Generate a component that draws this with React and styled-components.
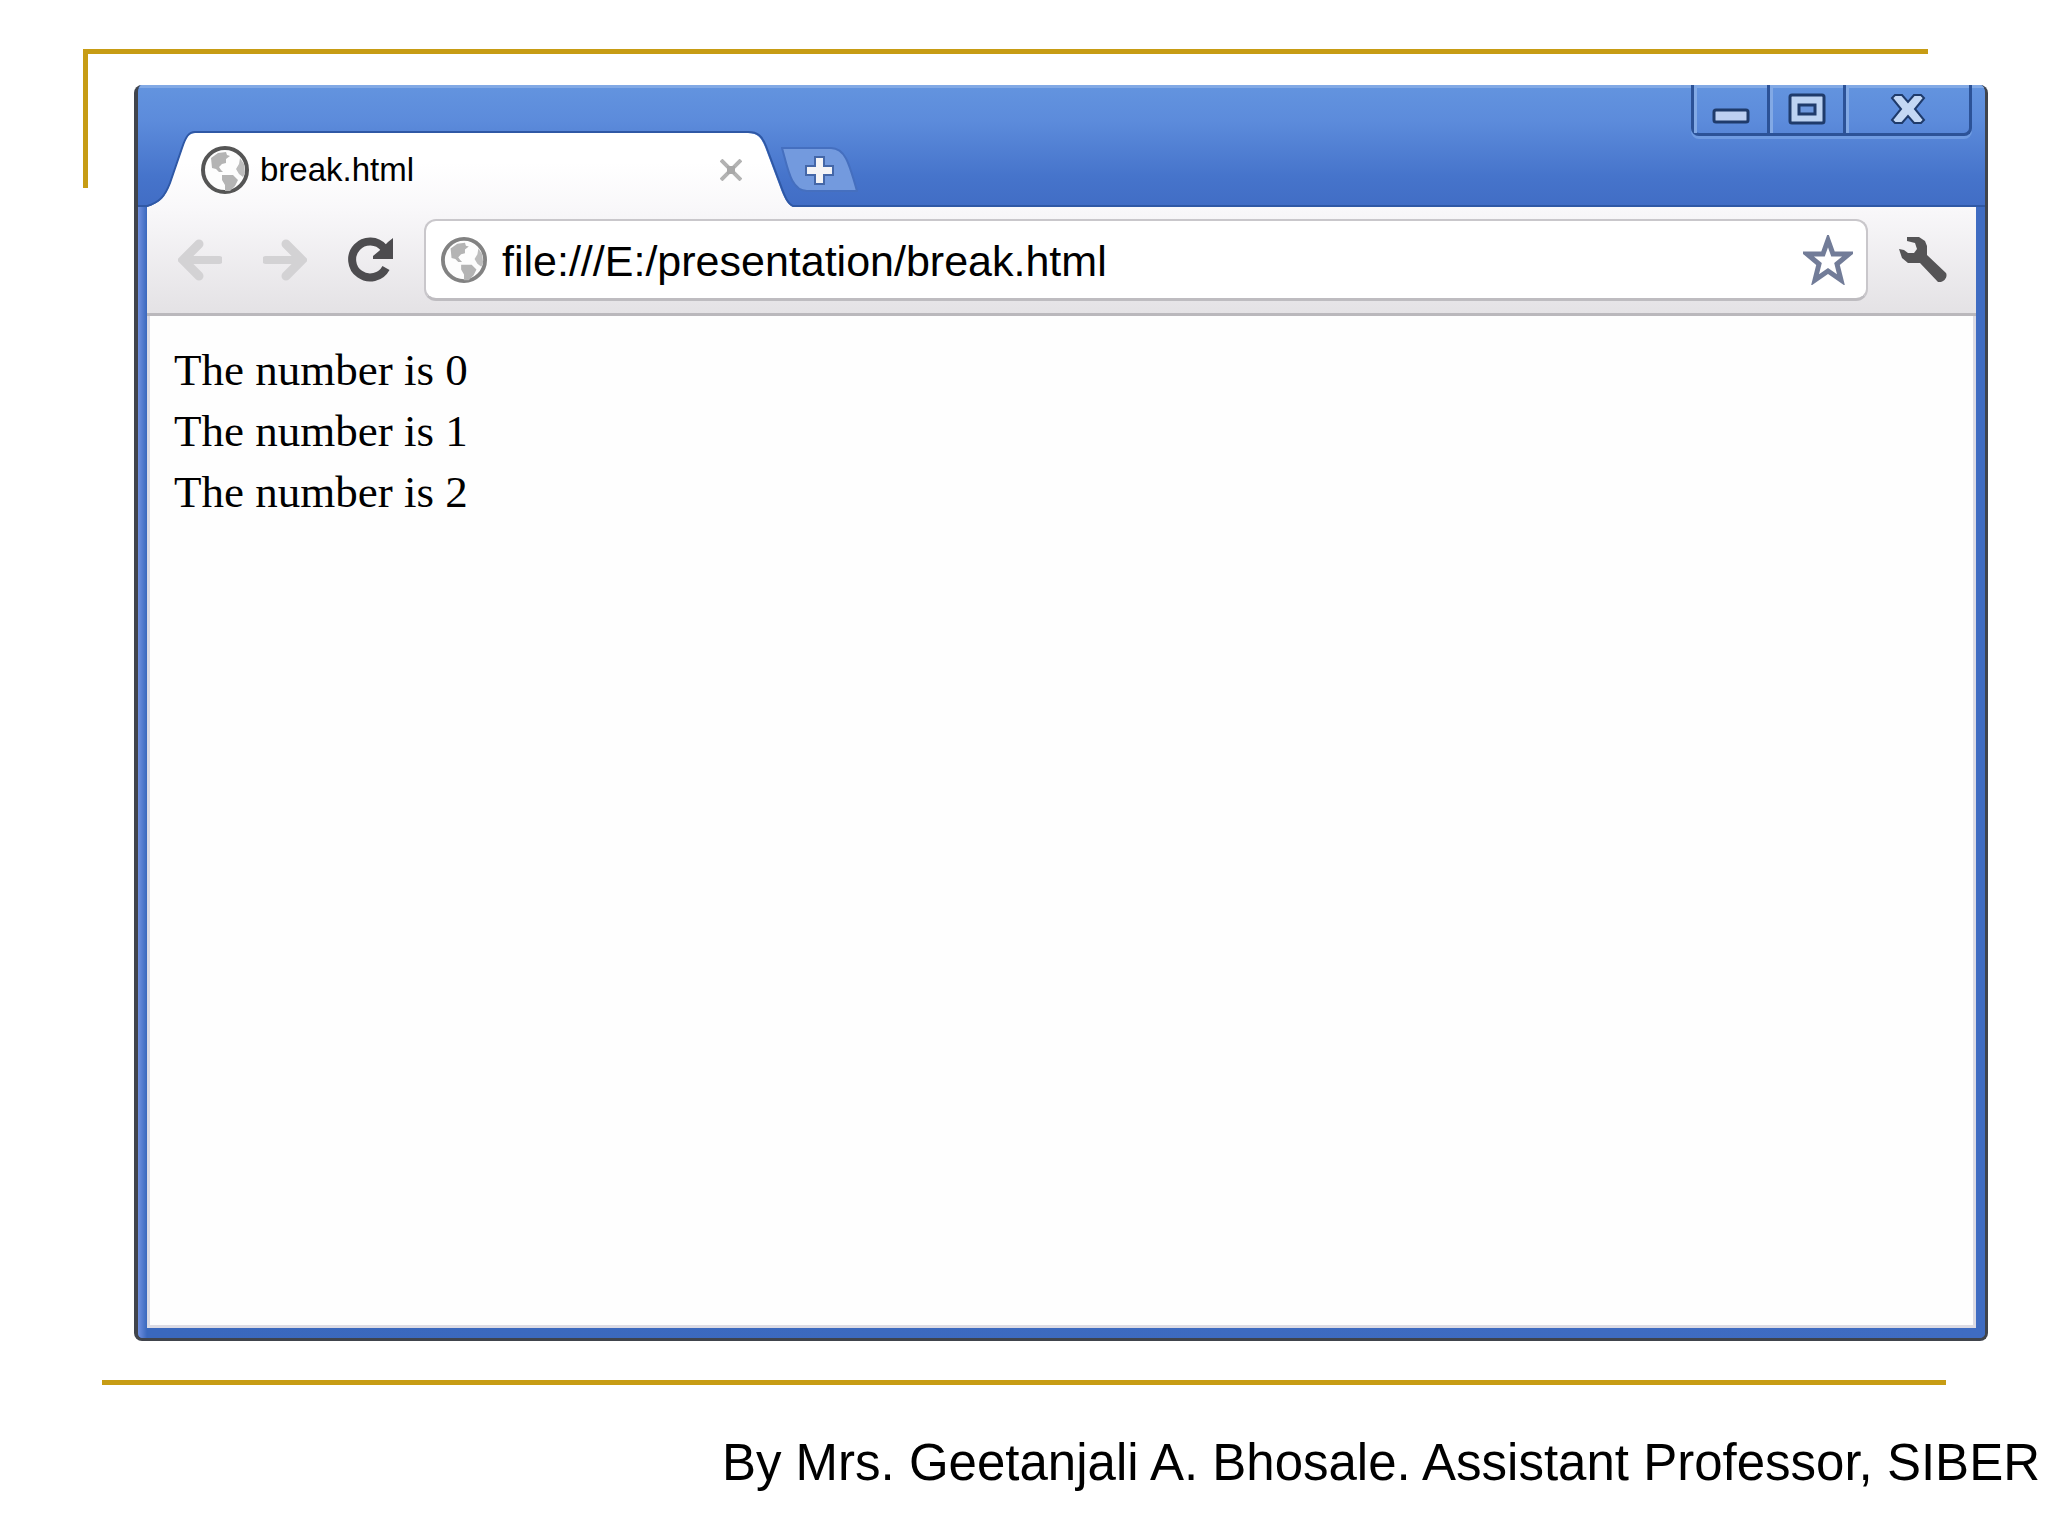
import React, { useState } from 'react'
import styled, { createGlobalStyle } from 'styled-components'

const lines = ['The number is 0', 'The number is 1', 'The number is 2']

function Globe({ size, stroke }) {
    return (
        <svg width={size} height={size} viewBox="0 0 48 48" aria-hidden="true">
            <circle cx="24" cy="24" r="22" fill="#fdfdfd" stroke={stroke} strokeWidth="4" />
            <path
                d="M10 12 L17 7 L25 6 L26 9 L29 10 L25 13 L25 17 L21 18 L18 21 L20 24 L22 26 L18 26 L15 23 L11 22 Z"
                fill="#b4b4b4"
            />
            <path d="M21 29 L32 29 L37 34 L34 40 L29 45 L24 45 L24 39 L21 34 Z" fill="#b4b4b4" />
            <path d="M39 12 L43 18 L44 27 L42 31 L38 28 L35 23 L38 18 Z" fill="#bdbdbd" />
        </svg>
    )
}

function App() {
    const [url, setUrl] = useState('file:///E:/presentation/break.html')

    return (
        <Slide>
            <GlobalStyle />
            <Corner />
            <BrowserWindow>
                <TitleBar>
                    <Tabs>
                        <svg width="48" height="76" viewBox="0 0 48 76" aria-hidden="true">
                            <path d="M0 76 C13 72 18 66 23 53 L35 18 C39 6 42 2 48 2 V76 Z" fill="url(#tabFill)" />
                            <path
                                d="M0 75 C13 71 18 65 23 52 L35 17 C39 5 42 1 48 1"
                                fill="none"
                                stroke="#2f58a5"
                                strokeWidth="2"
                            />
                            <defs>
                                <linearGradient id="tabFill" x1="0" y1="0" x2="0" y2="1">
                                    <stop offset="0.4" stopColor="#ffffff" />
                                    <stop offset="1" stopColor="#f9f8fa" />
                                </linearGradient>
                            </defs>
                        </svg>
                        <Tab>
                            <Globe size={48} stroke="#555555" />
                            <TabTitle>break.html</TabTitle>
                            <IconButton aria-label="Close tab">
                                <svg width="22" height="22" viewBox="0 0 22 22">
                                    <path d="M1 1 L21 21 M21 1 L1 21" stroke="#b3b3b3" strokeWidth="4" />
                                    <path d="M7 7 H15 V15 H7 Z" fill="#a8a8a8" />
                                </svg>
                            </IconButton>
                        </Tab>
                        <svg width="45" height="76" viewBox="0 0 45 76" aria-hidden="true">
                            <path d="M0 2 C9 2 13 6 17 16 L32 56 C36 67 39 73 45 76 H0 Z" fill="url(#tabFill)" />
                            <path
                                d="M0 1 C10 1 14 5 18 15 L33 55 C37 66 40 73 45 75"
                                fill="none"
                                stroke="#2f58a5"
                                strokeWidth="2"
                            />
                        </svg>
                        <NewTab aria-label="New tab">
                            <svg width="77" height="46" viewBox="0 0 77 46">
                                <path
                                    d="M1 1 H50 C64 1 68 16 76 44 H26 C10 44 7 22 1 1 Z"
                                    fill="#739ade"
                                    stroke="#456fbf"
                                    strokeWidth="2"
                                />
                                <path
                                    d="M34 10 H43 V19 H52 V28 H43 V37 H34 V28 H25 V19 H34 Z"
                                    fill="#f4f4f6"
                                    stroke="#4467a8"
                                    strokeWidth="2"
                                />
                            </svg>
                        </NewTab>
                    </Tabs>
                    <Controls>
                        <ControlButton aria-label="Minimize">
                            <svg width="38" height="32" viewBox="0 0 38 32">
                                <rect x="2" y="17" width="34" height="12" rx="2" fill="#bdd0f2" stroke="#1f3b6b" strokeWidth="3" />
                            </svg>
                        </ControlButton>
                        <ControlButton aria-label="Maximize">
                            <svg width="38" height="32" viewBox="0 0 38 32">
                                <rect x="2" y="2" width="34" height="28" rx="2" fill="#bdd3f2" stroke="#1f3b6b" strokeWidth="3" />
                                <rect x="11" y="12" width="16" height="9" fill="#6d98de" stroke="#1f3b6b" strokeWidth="3" />
                            </svg>
                        </ControlButton>
                        <ControlButton $wide aria-label="Close">
                            <svg width="38" height="32" viewBox="0 0 38 32">
                                <path
                                    d="M6 2 H13 L19 9 L25 2 H32 L35 5 L26 16 L35 27 L32 30 H25 L19 23 L13 30 H6 L3 27 L12 16 L3 5 Z"
                                    fill="#c4d8f4"
                                    stroke="#1f3b6b"
                                    strokeWidth="2"
                                />
                            </svg>
                        </ControlButton>
                    </Controls>
                </TitleBar>
                <WindowBody>
                    <Toolbar>
                        <Nav>
                            <IconButton aria-label="Back">
                                <svg width="44" height="42" viewBox="0 0 44 42">
                                    <path d="M41 21 H8" stroke="#d3d2d4" strokeWidth="8" strokeLinecap="round" />
                                    <path
                                        d="M21 5 L5 21 L21 37"
                                        fill="none"
                                        stroke="#d3d2d4"
                                        strokeWidth="9"
                                        strokeLinecap="round"
                                    />
                                </svg>
                            </IconButton>
                            <IconButton aria-label="Forward">
                                <svg width="44" height="42" viewBox="0 0 44 42">
                                    <path d="M3 21 H36" stroke="#d3d2d4" strokeWidth="8" strokeLinecap="round" />
                                    <path
                                        d="M23 5 L39 21 L23 37"
                                        fill="none"
                                        stroke="#d3d2d4"
                                        strokeWidth="9"
                                        strokeLinecap="round"
                                    />
                                </svg>
                            </IconButton>
                            <IconButton aria-label="Reload">
                                <svg width="46" height="46" viewBox="0 0 46 46">
                                    <path
                                        d="M36 11 A18 18 0 1 0 38 31"
                                        fill="none"
                                        stroke="#4d4c4f"
                                        strokeWidth="8"
                                    />
                                    <path d="M45 1 V22 H25 V19 L31 14 L40 5 Z" fill="#4d4c4f" />
                                </svg>
                            </IconButton>
                        </Nav>
                        <AddressBar>
                            <Globe size={46} stroke="#828282" />
                            <AddressInput
                                aria-label="Address"
                                spellCheck={false}
                                value={url}
                                onChange={(e) => setUrl(e.target.value)}
                            />
                            <IconButton aria-label="Bookmark this page">
                                <svg width="50" height="50" viewBox="0 0 50 50">
                                    <path
                                        d="M25 5 L30 19 H46 L34 29 L38 45 L25 36 L12 45 L16 29 L4 19 H20 Z"
                                        fill="#ffffff"
                                        stroke="#727c98"
                                        strokeWidth="5"
                                    />
                                </svg>
                            </IconButton>
                        </AddressBar>
                        <IconButton aria-label="Settings">
                            <svg width="50" height="48" viewBox="0 0 50 48">
                                <path
                                    d="M9 1 H21 L27 5 L29 10 V19 L48 37 C50 41 46 47 40 46 L22 27 H10 L4 22 L1 13 L6 14 L10 17 H16 L19 13 L17 7 L9 5 Z"
                                    fill="#555456"
                                />
                            </svg>
                        </IconButton>
                    </Toolbar>
                    <Page>
                        {lines.map((line) => (
                            <p key={line}>{line}</p>
                        ))}
                    </Page>
                </WindowBody>
            </BrowserWindow>
            <Rule />
            <Footer>By Mrs. Geetanjali A. Bhosale. Assistant Professor, SIBER</Footer>
        </Slide>
    )
}

export default App

const GlobalStyle = createGlobalStyle`
    * {
        box-sizing: border-box;
    }

    body {
        margin: 0;
        background: #ffffff;
        color: #000000;
        font-family: 'Liberation Sans', Arial, sans-serif;
    }

    svg {
        display: block;
        flex-shrink: 0;
    }
`

const Slide = styled.div`
    min-height: 100vh;
    display: flex;
    flex-direction: column;
    padding: 49px 0 43px;
`

const Corner = styled.div`
    height: 139px;
    margin: 0 120px 0 83px;
    border-top: 5px solid #c79c14;
    border-left: 5px solid #c79c14;
`

const BrowserWindow = styled.main`
    flex: 1;
    display: flex;
    flex-direction: column;
    margin: -103px 60px 0 134px;
    border: solid #40444c;
    border-width: 0 3px 3px 4px;
    border-radius: 8px;
    background: #3f6cc2;
    overflow: hidden;
`

const TitleBar = styled.header`
    height: 122px;
    display: flex;
    align-items: flex-start;
    justify-content: space-between;
    padding: 0 13px 0 9px;
    background: linear-gradient(#6394df 0%, #5c8bdb 30%, #4674cb 75%, #416dc5 100%);
    box-shadow:
        inset 0 3px #82a9e5,
        inset 0 -2px #2f58a5;
`

const Tabs = styled.div`
    align-self: flex-end;
    display: flex;
    align-items: flex-end;
`

const Tab = styled.div`
    width: 553px;
    height: 76px;
    display: flex;
    align-items: center;
    gap: 11px;
    padding: 0 6px;
    border-top: 2px solid #2f58a5;
    background: linear-gradient(#ffffff 40%, #f9f8fa);
`

const TabTitle = styled.span`
    flex: 1;
    font-size: 33px;
    line-height: 40px;
`

const IconButton = styled.button`
    padding: 0;
    border: 0;
    background: none;
    cursor: pointer;
`

const NewTab = styled(IconButton)`
    margin: 0 0 14px -12px;
`

const Controls = styled.div`
    display: flex;
    height: 51px;
    border: solid #2c5297;
    border-width: 0 3px 3px;
    border-radius: 0 0 8px 8px;
    box-shadow: 0 3px #6f9be2;
`

const ControlButton = styled.button`
    width: ${(props) => (props.$wide ? '123px' : '76px')};
    display: flex;
    justify-content: center;
    padding: 8px 0 0;
    border: 0;
    border-right: ${(props) => (props.$wide ? '0' : '3px solid #2c5297')};
    background: none;
    box-shadow: inset 3px 0 #82a9e5;
    cursor: pointer;
`

const WindowBody = styled.div`
    flex: 1;
    display: flex;
    flex-direction: column;
    padding: 0 9px 10px;
    background: linear-gradient(90deg, #7090e0 0, #3a68bd 9px, #3f6cc2 100%);
`

const Toolbar = styled.div`
    height: 109px;
    display: flex;
    align-items: center;
    gap: 30px;
    padding: 0 28px 0 31px;
    border-bottom: 3px solid #bab8bc;
    background: linear-gradient(#f9f8fa, #e4e2e5);
`

const Nav = styled.nav`
    display: flex;
    align-items: center;
    gap: 41px;
`

const AddressBar = styled.div`
    flex: 1;
    height: 82px;
    display: flex;
    align-items: center;
    gap: 15px;
    padding: 0 13px 0 15px;
    border: 2px solid #c9c7cb;
    border-bottom: 3px solid #bebcc0;
    border-radius: 12px;
    background: #ffffff;
`

const AddressInput = styled.input`
    flex: 1;
    min-width: 0;
    height: 60px;
    padding: 4px 0 0;
    border: 0;
    outline: 0;
    background: none;
    color: #000000;
    font-family: inherit;
    font-size: 43px;
`

const Page = styled.section`
    flex: 1;
    padding: 24px;
    border: solid #dcdbe4;
    border-width: 0 3px 3px;
    background: #fefefe;
    font-family: 'Liberation Serif', 'Times New Roman', serif;
    font-size: 45px;
    line-height: 61px;

    p {
        margin: 0;
    }
`

const Rule = styled.hr`
    width: auto;
    height: 5px;
    margin: 39px 102px 0;
    align-self: stretch;
    border: 0;
    background: #c79c14;
`

const Footer = styled.footer`
    margin-top: 48px;
    padding-right: 8px;
    font-size: 51px;
    line-height: 60px;
    text-align: right;
`
